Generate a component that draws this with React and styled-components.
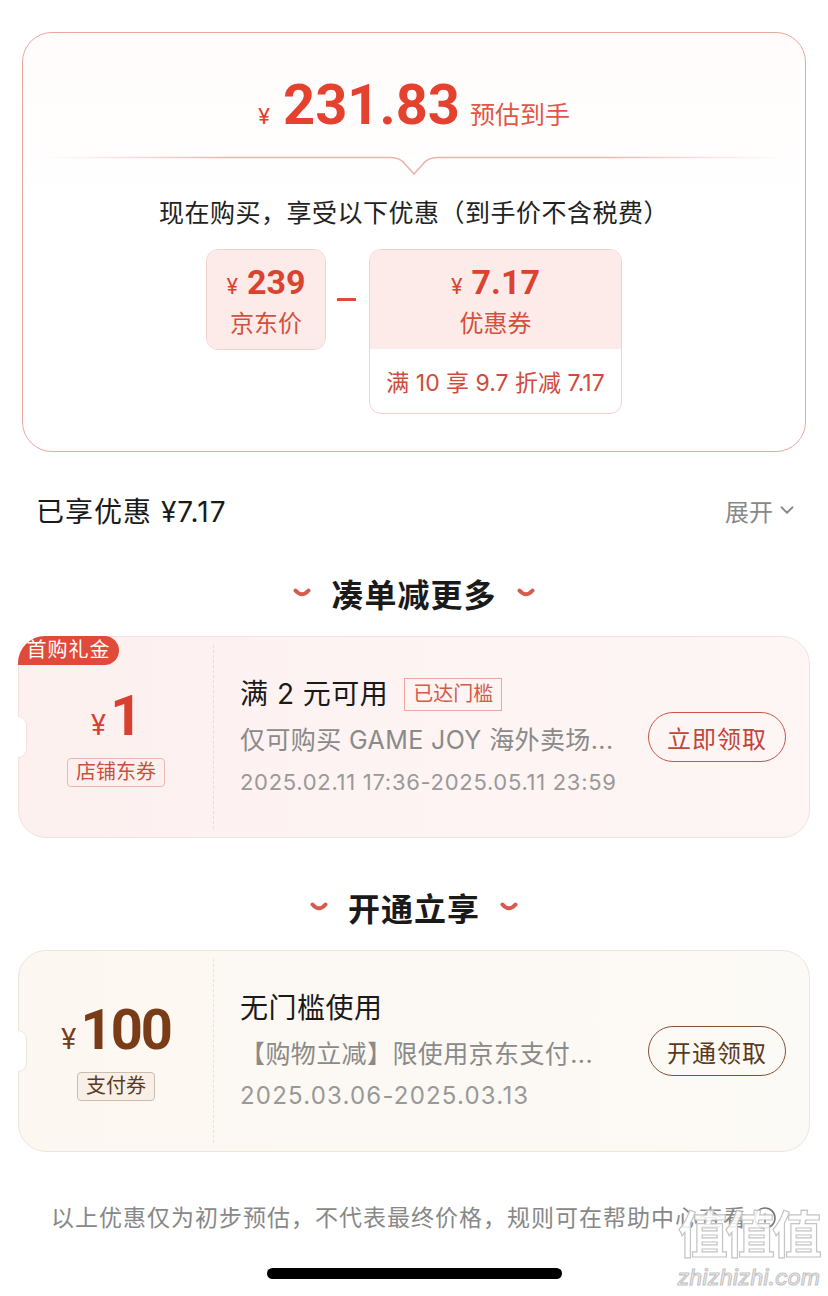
import React from 'react';
import styled, { createGlobalStyle } from 'styled-components';
import { ChevronDown, Info } from 'lucide-react';

const GlobalStyle = createGlobalStyle`
    html, body {
        margin: 0;
        padding: 0;
        background: #fff;
    }
    body {
        font-family: Inter, 'Noto Sans CJK SC', sans-serif;
        color: #1a1a1a;
    }
    * {
        box-sizing: border-box;
    }
`;

const Page = styled.div`
    position: relative;
    width: 828px;
    min-height: 1296px;
    padding: 32px 18px 0;
    display: flex;
    flex-direction: column;
    overflow: hidden;
`;

const PriceCard = styled.section`
    margin: 0 4px;
    border: 1px solid #eba79e;
    border-radius: 30px;
    background: linear-gradient(#fffcfb, #fff 45%);
    padding-bottom: 37px;
    display: flex;
    flex-direction: column;
    align-items: center;
`;

const PriceRow = styled.div`
    margin-top: 44px;
    height: 56px;
    display: flex;
    align-items: baseline;
    line-height: 56px;
    color: #e4412f;
`;

const Yen = styled.span`
    font-size: ${(p) => p.$size || 22}px;
    margin-right: ${(p) => p.$gap ?? 10}px;
`;

const BigNum = styled.span`
    font-family: Roboto, 'Liberation Sans', sans-serif;
    font-weight: 700;
    font-size: ${(p) => p.$size}px;
    letter-spacing: ${(p) => p.$ls ?? 0}px;
`;

const Hint = styled.span`
    margin-left: 10px;
    font-size: 25px;
    color: #e25646;
`;

const Divider = styled.svg`
    margin-top: 23px;
    display: block;
`;

const Subtitle = styled.div`
    margin-top: 20px;
    font-size: 25px;
    line-height: 34px;
    letter-spacing: 0.5px;
    color: #222;
`;

const BoxRow = styled.div`
    margin-top: 19px;
    display: flex;
    align-items: flex-start;
`;

const PriceBox = styled.div`
    width: ${(p) => p.$w}px;
    border: 1px solid #f4d2cc;
    border-radius: 12px;
    overflow: hidden;
    background: #fff;
`;

const BoxTop = styled.div`
    height: 99px;
    background: #fcebe8;
    padding-top: 13px;
    display: flex;
    flex-direction: column;
    align-items: center;
    color: #d9432f;
`;

const BoxAmount = styled.div`
    display: flex;
    align-items: baseline;
    height: 38px;
    line-height: 38px;
`;

const BoxLabel = styled.div`
    margin-top: 8px;
    font-size: 24px;
    line-height: 30px;
    color: #d4503f;
`;

const BoxBottom = styled.div`
    height: 64px;
    display: flex;
    align-items: center;
    justify-content: center;
    font-size: 23px;
    color: #d24a3a;
`;

const Minus = styled.div`
    width: 19px;
    height: 3px;
    margin: 49px 13px 0 11px;
    background: #e0483a;
`;

const SummaryRow = styled.div`
    margin-top: 38px;
    height: 40px;
    padding: 0 12px 0 18px;
    display: flex;
    align-items: center;
    justify-content: space-between;
`;

const Saved = styled.div`
    font-size: 28px;
    letter-spacing: 1px;
    color: #1a1a1a;
`;

const Expand = styled.div`
    display: flex;
    align-items: center;
    gap: 3px;
    font-size: 24px;
    color: #888;
`;

const SectionTitle = styled.h2`
    margin: ${(p) => p.$top}px 0 0;
    height: 44px;
    display: flex;
    align-items: center;
    justify-content: center;
    gap: 20px;
    font-size: 32px;
    font-weight: 700;
    letter-spacing: 1px;
    color: #1a1a1a;
`;

const Coupon = styled.div`
    position: relative;
    margin-top: 21px;
    height: 202px;
    border: 1px solid ${(p) => p.$line};
    border-radius: 28px;
    background: ${(p) => p.$bg};
    display: flex;
`;

const Notch = styled.div`
    position: absolute;
    left: -1px;
    top: 50%;
    transform: translateY(-50%);
    width: 9px;
    height: 42px;
    background: #fff;
    border: 1px solid ${(p) => p.$line};
    border-left: none;
    border-radius: 0 21px 21px 0;
`;

const Badge = styled.div`
    position: absolute;
    top: -1px;
    left: -1px;
    width: 101px;
    height: 29px;
    border-radius: 28px 15px 15px 0;
    background: #e04a3a;
    color: #fff;
    font-size: 20px;
    line-height: 29px;
    text-align: center;
    letter-spacing: 1px;
`;

const CouponLeft = styled.div`
    width: 194px;
    display: flex;
    flex-direction: column;
    align-items: center;
    justify-content: center;
    color: ${(p) => p.$color};
`;

const CouponAmount = styled.div`
    display: flex;
    align-items: baseline;
    height: 56px;
    line-height: 56px;
`;

const CouponTag = styled.div`
    margin-top: 14px;
    height: 29px;
    padding: 0 8px;
    border: 1px solid ${(p) => p.$line};
    border-radius: 4px;
    background: ${(p) => p.$bg};
    color: ${(p) => p.$color};
    font-size: 20px;
    line-height: 27px;
`;

const CouponRight = styled.div`
    flex: 1;
    margin: 8px 0;
    border-left: 1px dashed ${(p) => p.$line};
    padding: 0 23px 0 26px;
    display: flex;
    align-items: center;
`;

const CouponInfo = styled.div`
    align-self: flex-start;
    padding-top: 31px;
    display: flex;
    flex-direction: column;
`;

const CouponTitle = styled.div`
    display: flex;
    align-items: center;
    gap: 16px;
    font-size: 28px;
    line-height: 36px;
    letter-spacing: 0.5px;
    color: #1a1a1a;
`;

const ReachedTag = styled.span`
    height: 33px;
    padding: 0 8px;
    border: 1px solid #eaa89f;
    font-size: 20px;
    line-height: 31px;
    letter-spacing: 0;
    color: #d45a4a;
`;

const CouponDesc = styled.div`
    margin-top: 11px;
    font-size: 25px;
    line-height: 34px;
    letter-spacing: 0.4px;
    color: #8a8a8a;
    white-space: nowrap;
`;

const CouponDate = styled.div`
    margin-top: 10px;
    font-size: ${(p) => p.$size}px;
    line-height: 30px;
    letter-spacing: ${(p) => p.$ls}px;
    color: #999;
    white-space: nowrap;
`;

const CouponButton = styled.button`
    margin-left: auto;
    width: 138px;
    height: 50px;
    border: 1.5px solid ${(p) => p.$color};
    border-radius: 25px;
    background: transparent;
    color: ${(p) => p.$text};
    font-family: inherit;
    font-size: 24px;
    letter-spacing: 1px;
    padding: 0;
`;

const Footer = styled.div`
    margin-top: 50px;
    display: flex;
    align-items: center;
    justify-content: center;
    gap: 6px;
    font-size: 23px;
    line-height: 32px;
    letter-spacing: 1px;
    color: #888;
`;

const HomeBar = styled.div`
    margin: 34px auto 0;
    width: 295px;
    height: 11px;
    border-radius: 6px;
    background: #000;
`;

const Watermark = styled.div`
    position: absolute;
    right: 8px;
    bottom: 6px;
    display: flex;
    flex-direction: column;
    align-items: center;
    color: rgba(255, 255, 255, 0.85);
    -webkit-text-stroke: 1.2px #c4c4c4;
    pointer-events: none;
`;

const WmBig = styled.div`
    font-size: 50px;
    line-height: 58px;
    letter-spacing: -3px;
    font-weight: 700;
`;

const WmSmall = styled.div`
    font-size: 22px;
    line-height: 26px;
    font-style: italic;
`;

const Smile = () => (
    <svg width="18" height="10" viewBox="0 0 18 10">
        <path
            d="M2.5 2.5 Q9 10 15.5 2.5"
            fill="none"
            stroke="#d65a4e"
            strokeWidth="4"
            strokeLinecap="round"
        />
    </svg>
);

const Section = ({ title, top }) => (
    <SectionTitle $top={top}>
        <Smile />
        {title}
        <Smile />
    </SectionTitle>
);

const CouponCard = ({ theme, badge, amount, amountLs, tag, title, reached, desc, date, dateSize, dateLs, action }) => (
    <Coupon $bg={theme.bg} $line={theme.line}>
        {badge && <Badge>{badge}</Badge>}
        <Notch $line={theme.line} />
        <CouponLeft $color={theme.amount}>
            <CouponAmount>
                <Yen $size={28} $gap={4}>¥</Yen>
                <BigNum $size={56} $ls={amountLs}>{amount}</BigNum>
            </CouponAmount>
            <CouponTag $line={theme.tagLine} $bg={theme.tagBg} $color={theme.tagText}>
                {tag}
            </CouponTag>
        </CouponLeft>
        <CouponRight $line={theme.dash}>
            <CouponInfo>
                <CouponTitle>
                    {title}
                    {reached && <ReachedTag>{reached}</ReachedTag>}
                </CouponTitle>
                <CouponDesc>{desc}</CouponDesc>
                <CouponDate $size={dateSize} $ls={dateLs}>{date}</CouponDate>
            </CouponInfo>
            <CouponButton $color={theme.btn} $text={theme.btnText}>
                {action}
            </CouponButton>
        </CouponRight>
    </Coupon>
);

const redTheme = {
    bg: 'linear-gradient(90deg, #fdf1f0, #fdf6f5)',
    line: '#f2e2df',
    dash: '#efd9d5',
    amount: '#d9402f',
    tagLine: '#e9b9b1',
    tagBg: '#fdf0ee',
    tagText: '#c9503f',
    btn: '#c85548',
    btnText: '#c0453a',
};

const goldTheme = {
    bg: 'linear-gradient(90deg, #fcf7f1, #fcfaf6)',
    line: '#eee5da',
    dash: '#efe2d2',
    amount: '#7a3b18',
    tagLine: '#cbbcad',
    tagBg: '#f8f0e7',
    tagText: '#5a3a22',
    btn: '#7d5236',
    btnText: '#5a3a1e',
};

const App = () => {
    return (
        <Page>
            <GlobalStyle />
            <PriceCard>
                <PriceRow>
                    <Yen $size={22} $gap={13}>¥</Yen>
                    <BigNum $size={56}>231.83</BigNum>
                    <Hint>预估到手</Hint>
                </PriceRow>
                <Divider width="750" height="20" viewBox="0 0 750 20">
                    <defs>
                        <linearGradient id="fade" x1="0" x2="1" y1="0" y2="0">
                            <stop offset="0" stopColor="#f1c9c3" stopOpacity="0" />
                            <stop offset="0.25" stopColor="#e9b4ac" />
                            <stop offset="0.75" stopColor="#e9b4ac" />
                            <stop offset="1" stopColor="#f1c9c3" stopOpacity="0" />
                        </linearGradient>
                    </defs>
                    <path
                        d="M0 1.5 H352 Q361 1.5 366 8 L375 18 L384 8 Q389 1.5 398 1.5 H750"
                        fill="none"
                        stroke="url(#fade)"
                        strokeWidth="1.6"
                    />
                </Divider>
                <Subtitle>现在购买，享受以下优惠（到手价不含税费）</Subtitle>
                <BoxRow>
                    <PriceBox $w={120}>
                        <BoxTop>
                            <BoxAmount>
                                <Yen $size={21} $gap={9}>¥</Yen>
                                <BigNum $size={34}>239</BigNum>
                            </BoxAmount>
                            <BoxLabel>京东价</BoxLabel>
                        </BoxTop>
                    </PriceBox>
                    <Minus />
                    <PriceBox $w={253}>
                        <BoxTop>
                            <BoxAmount>
                                <Yen $size={21} $gap={9}>¥</Yen>
                                <BigNum $size={34}>7.17</BigNum>
                            </BoxAmount>
                            <BoxLabel>优惠券</BoxLabel>
                        </BoxTop>
                        <BoxBottom>满 10 享 9.7 折减 7.17</BoxBottom>
                    </PriceBox>
                </BoxRow>
            </PriceCard>

            <SummaryRow>
                <Saved>已享优惠 ¥7.17</Saved>
                <Expand>
                    展开
                    <ChevronDown size={22} strokeWidth={2} />
                </Expand>
            </SummaryRow>

            <Section title="凑单减更多" top={41} />
            <CouponCard
                theme={redTheme}
                badge="首购礼金"
                amount="1"
                amountLs={-1}
                tag="店铺东券"
                title="满 2 元可用"
                reached="已达门槛"
                desc="仅可购买 GAME JOY 海外卖场..."
                date="2025.02.11 17:36-2025.05.11 23:59"
                dateSize={22}
                dateLs={0.7}
                action="立即领取"
            />

            <Section title="开通立享" top={47} />
            <CouponCard
                theme={goldTheme}
                amount="100"
                amountLs={-2}
                tag="支付券"
                title="无门槛使用"
                desc="【购物立减】限使用京东支付..."
                date="2025.03.06-2025.03.13"
                dateSize={24}
                dateLs={1.2}
                action="开通领取"
            />

            <Footer>
                以上优惠仅为初步预估，不代表最终价格，规则可在帮助中心查看
                <Info size={24} strokeWidth={1.6} color="#777" />
            </Footer>
            <HomeBar />

            <Watermark>
                <WmBig>值值值</WmBig>
                <WmSmall>zhizhizhi.com</WmSmall>
            </Watermark>
        </Page>
    );
};

export default App;
